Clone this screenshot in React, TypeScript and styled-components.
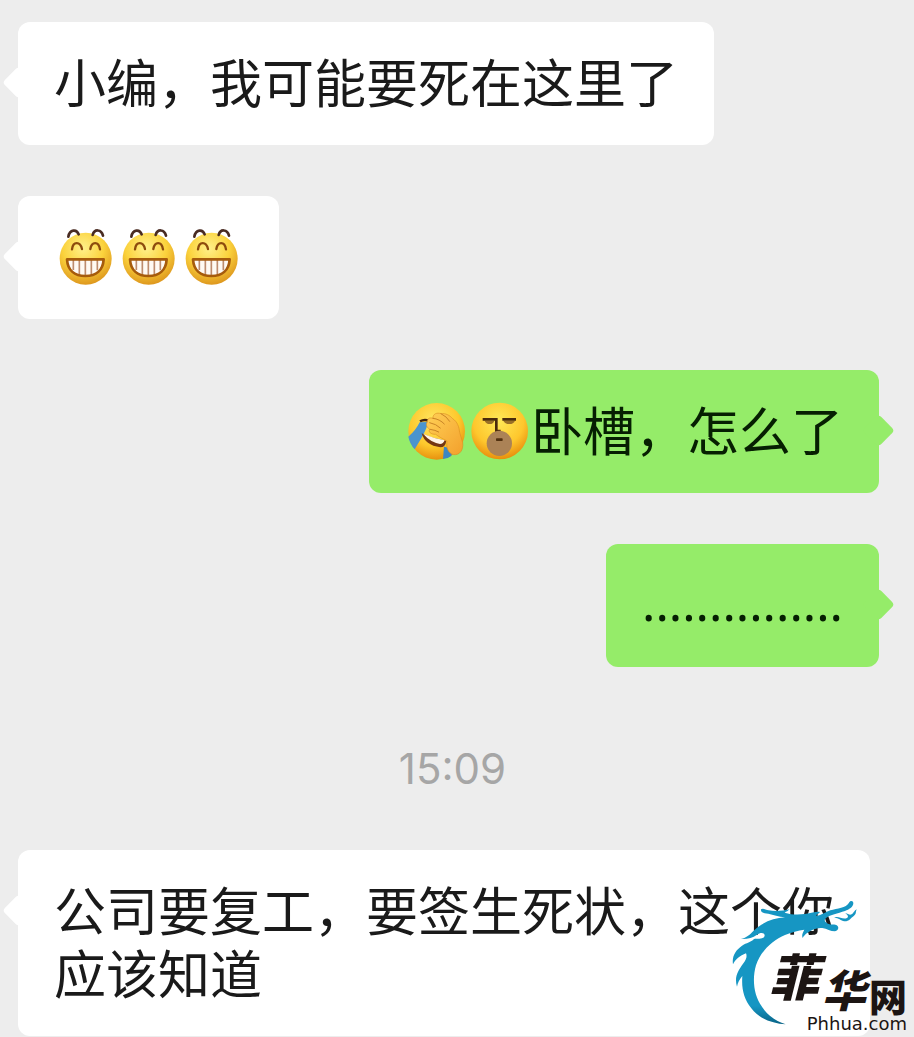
import React from "react";
import styled, { createGlobalStyle, css } from "styled-components";

const GlobalStyle = createGlobalStyle`
  * { box-sizing: border-box; }
  body {
    margin: 0;
    background: #ededed;
    font-family: "Noto Sans CJK SC", "Noto Sans", sans-serif;
  }
`;

const Page = styled.main`
  position: relative;
  overflow: hidden;
  padding: 22px 35px 1px 18px;
`;

const Thread = styled.ol`
  display: flex;
  flex-direction: column;
  gap: 51px;
  margin: 0;
  padding: 0;
  list-style: none;
`;

const Row = styled.li<{ $mine?: boolean }>`
  display: flex;
  justify-content: ${(p) => (p.$mine ? "flex-end" : "flex-start")};
`;

const Bubble = styled.p<{ $mine?: boolean }>`
  position: relative;
  max-width: 852px;
  margin: 0;
  padding: 27px 36px 33px;
  border-radius: 12px;
  font-size: 52px;
  line-height: 63px;
  color: ${(p) => (p.$mine ? "#061f02" : "#1a1a1a")};
  background: ${(p) => (p.$mine ? "#95ec69" : "#ffffff")};

  &::before {
    content: "";
    position: absolute;
    top: 49px;
    width: 23px;
    height: 23px;
    border-radius: 4px;
    background: inherit;
    transform: rotate(45deg);
    ${(p) => (p.$mine ? css`right: -11px;` : css`left: -11px;`)}
  }
`;

const Dots = styled.span`
  display: block;
  font-family: "Noto Sans", sans-serif;
  font-size: 50px;
`;

const Time = styled.time`
  padding: 21px 0 0 8px;
  font-family: Inter, sans-serif;
  font-size: 42px;
  line-height: 60px;
  color: #a6a6a6;
`;

const TimeRow = styled.li`
  display: flex;
  justify-content: center;
`;

const Emoji = styled.svg`
  width: 63px;
  height: 63px;
  vertical-align: bottom;
  overflow: visible;
`;

const Watermark = styled.aside`
  position: absolute;
  right: 0;
  bottom: 0;
  width: 194px;
  height: 147px;
  padding: 0 7px 4px 0;
  display: flex;
  flex-direction: column;
  justify-content: flex-end;
  align-items: flex-end;
  color: #1c1513;
`;

const Dragon = styled.svg`
  position: absolute;
  inset: 0;
  width: 100%;
  height: 100%;
`;

const SiteName = styled.div`
  position: relative;
  display: flex;
  align-items: flex-end;
  gap: 3px;
  font-weight: 900;
  line-height: 40px;
`;

const Brush = styled.span<{ $size: number; $lift: number }>`
  font-size: ${(p) => p.$size}px;
  font-style: italic;
  padding-bottom: ${(p) => p.$lift}px;
`;

const Block = styled.span`
  font-size: 38px;
`;

const SiteUrl = styled.div`
  position: relative;
  font-family: "DejaVu Sans", sans-serif;
  font-size: 18px;
  line-height: 18px;
`;

function Grin() {
  return (
    <Emoji viewBox="0 -9 189 189" role="img" aria-label="呲牙">
      <defs>
        <radialGradient id="grin" cx="45%" cy="30%" r="72%">
          <stop offset="0" stopColor="#fff08a" />
          <stop offset="0.55" stopColor="#fbd23c" />
          <stop offset="1" stopColor="#dc941c" />
        </radialGradient>
      </defs>
      <circle cx="95" cy="98" r="78" fill="url(#grin)" />
      <g fill="none" strokeLinecap="round">
        <path d="M43 32C47 10 68 8 74 25M116 27C121 8 142 9 147 29" stroke="#492b22" strokeWidth="8" />
        <path d="M54 70C57 45 79 46 84 69M109 69C113 46 134 45 138 70" stroke="#8d4b0d" strokeWidth="7" />
      </g>
      <path d="M39 100H149C147 133 126 150 94 150C62 150 41 133 39 100Z" fill="#fffaf3" />
      <path d="M58 102V132M76 102V145M94 102V148M112 102V145M130 102V133" stroke="#bd8c6e" strokeWidth="5" />
      <path d="M39 100H149C147 133 126 150 94 150C62 150 41 133 39 100Z" fill="none" stroke="#a65b0c" strokeWidth="8" strokeLinejoin="round" />
    </Emoji>
  );
}

function Facepalm() {
  return (
    <Emoji viewBox="0 -9 189 189" role="img" aria-label="捂脸">
      <defs>
        <radialGradient id="palm" cx="45%" cy="32%" r="68%">
          <stop offset="0" stopColor="#ffe763" />
          <stop offset="0.65" stopColor="#fdc82c" />
          <stop offset="1" stopColor="#e7920f" />
        </radialGradient>
        <linearGradient id="hand" x1="0" y1="0" x2="1" y2="1">
          <stop offset="0" stopColor="#ffd056" />
          <stop offset="1" stopColor="#f3a02c" />
        </linearGradient>
      </defs>
      <circle cx="95" cy="94" r="85" fill="url(#palm)" />
      <path d="M44 67L70 66C65 88 48 118 29 148Q14 131 10 110Q32 92 44 67Z" fill="#4a94cf" />
      <path d="M117 140L143 146L139 168Q129 176 114 177Z" fill="#3c86c4" />
      <path d="M45 64Q57 57 72 62" fill="none" stroke="#43230c" strokeWidth="7" />
      <path d="M50 100Q76 114 124 122Q121 142 106 142Q60 136 50 100Z" fill="#743713" />
      <path d="M55 102Q84 114 119 121Q115 132 105 132Q75 126 55 102Z" fill="#fff3e5" />
      <path d="M67 66C66 54 76 52 84 55C83 41 96 37 108 41C122 39 134 46 143 56C157 65 162 80 164 97L173 128C176 150 164 166 146 164C129 160 123 142 126 123C112 116 101 110 92 103C77 103 69 96 74 87C64 82 62 73 67 66Z" fill="url(#hand)" stroke="#dc8f22" strokeWidth="2" />
      <path d="M84 55Q104 57 118 72M108 41Q126 50 134 64M74 68Q94 72 106 84M76 88Q91 90 101 96" fill="none" stroke="#c98426" strokeWidth="3" strokeLinecap="round" />
    </Emoji>
  );
}

function Stunned() {
  return (
    <Emoji viewBox="0 -9 189 189" role="img" aria-label="惊呆">
      <defs>
        <radialGradient id="stun" cx="48%" cy="32%" r="68%">
          <stop offset="0" stopColor="#ffe957" />
          <stop offset="0.65" stopColor="#fec72d" />
          <stop offset="1" stopColor="#e88f0d" />
        </radialGradient>
      </defs>
      <circle cx="95" cy="93" r="85" fill="url(#stun)" />
      <path d="M50 62H79Q76 72 65 72Q54 72 50 62ZM106 62H141Q137 72 124 72Q111 72 106 62Z" fill="#997028" />
      <path d="M44 58H85V93H98M103 58H144" fill="none" stroke="#4b2b0c" strokeWidth="8" />
      <circle cx="94" cy="130" r="38" fill="#ab8256" />
      <rect x="84" y="115" width="20" height="8" rx="2" fill="#51300f" />
    </Emoji>
  );
}

function DragonMark() {
  return (
    <Dragon viewBox="0 0 582 441" aria-hidden="true">
      <defs>
        <linearGradient id="dragon" x1="0" y1="0" x2="0" y2="1">
          <stop offset="0.85" stopColor="#1696c3" />
          <stop offset="1" stopColor="#086386" />
        </linearGradient>
      </defs>
      <path
        fill="url(#dragon)"
        d="M123 58C130 53 137 60 146 61C168 65 190 62 208 58C205 63 199 65 194 68C215 75 238 74 255 72C276 69 289 64 300 66C296 72 287 74 289 77C302 78 316 66 331 61C352 54 378 55 387 38C390 31 400 31 400 40C400 51 387 59 375 63C353 70 331 75 319 83C309 91 316 98 326 102C335 106 344 101 352 107C358 113 354 122 345 124C331 124 321 116 307 114C289 112 274 120 263 128C256 132 251 138 248 144C244 135 249 127 253 119C235 121 214 127 195 135C157 151 121 185 108 226C96 267 101 316 126 350C145 379 170 394 197 403C158 400 119 388 94 355C72 326 64 298 67 258C59 268 53 277 51 290C42 261 55 242 68 223C81 207 81 197 78 190C60 197 46 208 39 223C35 198 48 180 65 168C81 157 92 158 102 147C112 144 130 150 134 137C134 128 122 126 111 134C97 144 82 148 63 147C80 143 90 133 101 122C130 95 162 84 195 82C176 80 160 74 145 71C133 69 121 69 123 58Z"
      />
      <path
        fill="#1696c3"
        d="M342 83C355 76 369 91 382 83C387 79 382 74 375 69C385 70 388 77 395 73C402 69 402 61 411 58C405 65 411 71 402 77C392 84 387 95 373 94C362 92 355 82 342 83Z"
      />
    </Dragon>
  );
}

export default function App() {
  return (
    <>
      <GlobalStyle />
      <Page>
        <Thread>
          <Row>
            <Bubble>小编，我可能要死在这里了</Bubble>
          </Row>
          <Row>
            <Bubble>
              <Grin />
              <Grin />
              <Grin />
            </Bubble>
          </Row>
          <Row $mine>
            <Bubble $mine>
              <Facepalm />
              <Stunned />
              卧槽，怎么了
            </Bubble>
          </Row>
          <Row $mine>
            <Bubble $mine>
              <Dots>...............</Dots>
            </Bubble>
          </Row>
          <TimeRow>
            <Time>15:09</Time>
          </TimeRow>
          <Row>
            <Bubble>公司要复工，要签生死状，这个你应该知道</Bubble>
          </Row>
        </Thread>
        <Watermark>
          <DragonMark />
          <SiteName>
            <Brush $size={50} $lift={21}>菲</Brush>
            <Brush $size={44} $lift={7}>华</Brush>
            <Block>网</Block>
          </SiteName>
          <SiteUrl>Phhua.com</SiteUrl>
        </Watermark>
      </Page>
    </>
  );
}
